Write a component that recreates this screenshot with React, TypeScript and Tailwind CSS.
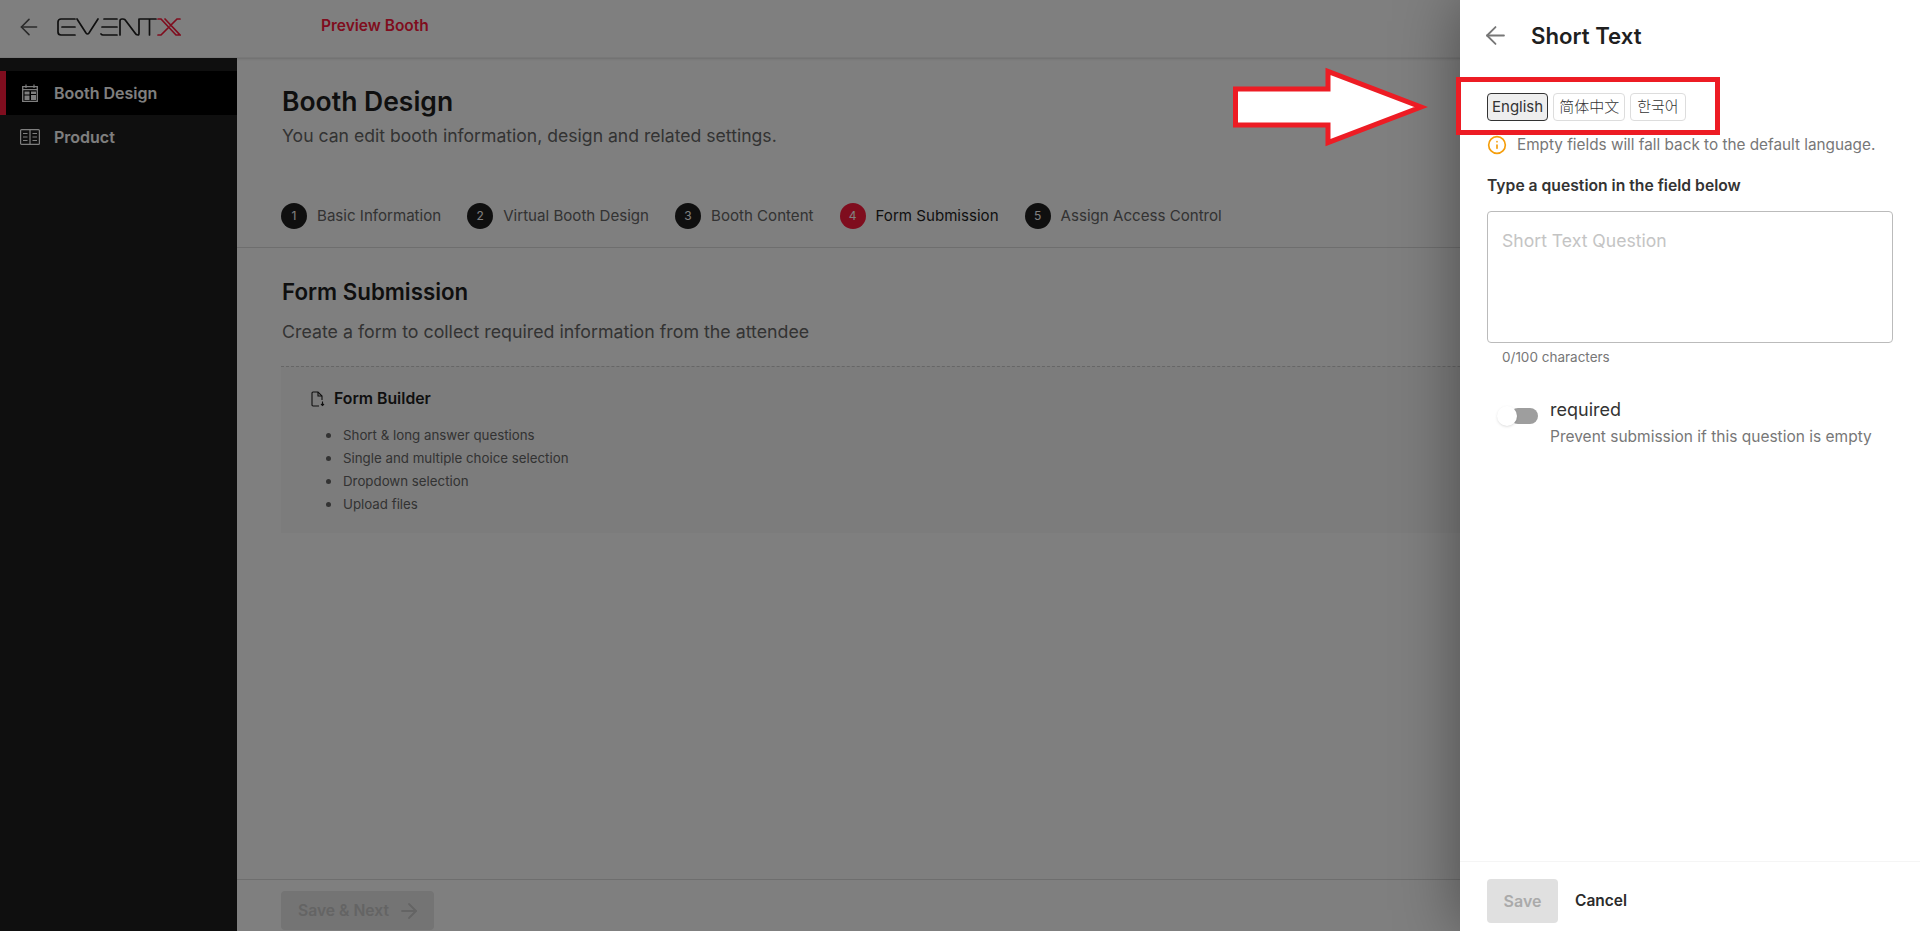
import { ArrowLeft, ArrowRight, Info } from "lucide-react";

const steps = [
    { n: 1, label: "Basic Information" },
    { n: 2, label: "Virtual Booth Design" },
    { n: 3, label: "Booth Content" },
    { n: 4, label: "Form Submission", active: true },
    { n: 5, label: "Assign Access Control" },
];

const features = [
    "Short & long answer questions",
    "Single and multiple choice selection",
    "Dropdown selection",
    "Upload files",
];

const Logo = () => (
    <svg width="124" height="20" viewBox="0 0 124 20" fill="none" strokeWidth="1.700" strokeLinecap="round">
        <g stroke="#1f1f1f">
            <path d="M18 2H4a3 3 0 0 0-3 3v10a3 3 0 0 0 3 3h14M5 10h13" />
            <path d="M20 2l9 14q1.500 2 3 0l9-14" />
            <path d="M60 2H47M60 18H46a3 3 0 0 1-2-1M45 10h15" />
            <path d="M63 18V4q0-2 2-2h1q2 0 3 2l9 12q1 2 3 2 1 0 1-2V2" />
            <path d="M83 2h16M92.500 2v16" />
        </g>
        <path d="M101 2h3l15 16h4L108 2M123 2h-3l-7 7M101 18h3l7-7" stroke="#ff1a3c" />
    </svg>
);

const BoothIcon = () => (
    <svg width="16" height="18" viewBox="0 0 16 18" fill="none">
        <path d="M.700 2.700h14.600v14.600H.700z" stroke="currentColor" strokeWidth="1.300" />
        <path d="M4 .500v3.500M12 .500v3.500M.700 5.700h14.600" stroke="currentColor" strokeWidth="1.200" />
        <path d="M2.500 7.500h5v3h-5zM9 11h5v5H9zM2.500 11.500h5v4.500h-5zM9 7.500h5v2.500H9z" fill="currentColor" />
    </svg>
);

const ProductIcon = () => (
    <svg width="20" height="16" viewBox="0 0 20 16" fill="none" stroke="currentColor" strokeWidth="1.200">
        <rect x="0.600" y="0.600" width="18.800" height="14.800" rx="1" />
        <path d="M10 1v14M3 4.500h4.500M3 8h4.500M3 11.500h4.500M12.500 4.500H17M12.500 8H17M12.500 11.500H17" />
    </svg>
);

const FormIcon = () => (
    <svg width="14" height="16" viewBox="0 0 14 16" fill="none" stroke="#1f1f1f" strokeWidth="1.100">
        <path d="M8 15H2a1 1 0 0 1-1-1V2a1 1 0 0 1 1-1h5l4 4v4" />
        <path d="M7 1v4h4M11.500 10.500v4M10 13l1.500 1.500L13 13" />
    </svg>
);

const App = () => {
    return (
        <div className="relative h-[931px] overflow-hidden bg-white font-['Inter','Noto_Sans_CJK_SC',sans-serif] text-[#1f1f1f]">
            <header className="flex h-[58px] items-center border-b border-[#f0f0f0] shadow-sm">
                <ArrowLeft className="ml-[16px] mb-[4px] text-[#555]" size={26} strokeWidth={1.500} />
                <div className="ml-[15px] mb-[4px]"><Logo /></div>
                <span className="ml-[140px] mb-[6px] text-[15.500px] font-semibold text-[#ff1a3c]">Preview Booth</span>
            </header>

            <div className="flex h-[873px]">
                <aside className="w-[237px] shrink-0 bg-[#1f1f1f] pt-[13px] text-white">
                    <div className="flex h-[44px] items-center border-l-[6px] border-[#ff1a3c] bg-black pl-[16px] text-[16px] font-semibold">
                        <BoothIcon />
                        <span className="ml-[16px]">Booth Design</span>
                    </div>
                    <div className="flex h-[44px] items-center pl-[20px] text-[16px] font-semibold">
                        <ProductIcon />
                        <span className="ml-[14px]">Product</span>
                    </div>
                </aside>

                <main className="flex min-w-0 flex-1 flex-col">
                    <div className="flex-1 pt-[26px]">
                        <div className="px-[45px]">
                            <h1 className="text-[26.500px] font-semibold leading-[34px]">Booth Design</h1>
                            <p className="mt-[4px] text-[17.600px] leading-[28px] text-[#666]">You can edit booth information, design and related settings.</p>
                        </div>
                        <div className="mt-[39px] flex h-[59px] gap-[26px] border-b border-[#ddd] px-[44px] pb-[4px]">
                            {steps.map((s) => (
                                <div key={s.n} className="flex items-center gap-[10px]">
                                    <span className={`flex h-[26px] w-[26px] items-center justify-center rounded-full text-[12px] text-white ${s.active ? "bg-[#ff1a3c]" : "bg-[#1f1f1f]"}`}>{s.n}</span>
                                    <span className={`text-[15.100px] ${s.active ? "text-[#1f1f1f]" : "text-[#666]"}`}>{s.label}</span>
                                </div>
                            ))}
                        </div>
                        <div className="px-[44px] pt-[30px]">
                            <h2 className="ml-px text-[22.300px] font-semibold leading-[28px]">Form Submission</h2>
                            <p className="ml-px mt-[14px] text-[17.800px] leading-[24px] text-[#666]">Create a form to collect required information from the attendee</p>
                            <div className="mt-[22px] h-[167px] border-t border-dashed border-[#ccc] bg-[#f9f9f9] pl-[30px] pt-[22px]">
                                <div className="flex h-[20px] items-center gap-[9px] text-[15.800px] font-semibold">
                                    <FormIcon />
                                    <span>Form Builder</span>
                                </div>
                                <ul className="mt-[14px] list-disc pl-[32px] text-[13.300px] leading-[22px] text-[#666] marker:text-[17px]">
                                    {features.map((f) => (
                                        <li key={f}>{f}</li>
                                    ))}
                                </ul>
                            </div>
                        </div>
                    </div>
                    <div className="h-[52px] border-t border-[#ddd] px-[44px] pt-[11px]">
                        <button className="flex h-[39px] w-[153px] items-center justify-center gap-[8px] rounded-[4px] bg-[#e8e8e8] pl-[4px] text-[15.700px] font-semibold text-[#c8c8c8]">
                            Save &amp; Next
                            <ArrowRight size={24} strokeWidth={1.800} />
                        </button>
                    </div>
                </main>
            </div>

            {/* dim layer */}
            <div className="absolute inset-0 bg-black/50" />

            {/* drawer */}
            <div className="absolute inset-y-0 right-0 flex w-[460px] flex-col bg-white shadow-[0_0_60px_rgba(0,0,0,0.4)]">
                <div className="flex h-[71px] items-center pl-[21px]">
                    <ArrowLeft className="text-[#777]" size={29} strokeWidth={1.500} />
                    <span className="ml-[21px] text-[22.200px] font-semibold">Short Text</span>
                </div>
                <div className="flex-1 px-[27px] pt-[22px]">
                    <div className="flex gap-[5px] text-[15px] text-[#333]">
                        <span className="flex h-[28px] items-center rounded-[4px] border border-[#333] bg-[#eee] px-[4px]">English</span>
                        <span className="flex h-[28px] items-center rounded-[4px] border border-[#ddd] px-[5px] font-light">简体中文</span>
                        <span className="flex h-[28px] items-center rounded-[4px] border border-[#ddd] px-[6px] font-light">한국어</span>
                    </div>
                    <div className="mt-[14px] flex h-[20px] items-center gap-[10px] text-[15.300px] leading-[20px] text-[#777]">
                        <Info size={20} className="text-[#f59e0b]" />
                        <span>Empty fields will fall back to the default language.</span>
                    </div>
                    <p className="mt-[21px] text-[15.700px] font-semibold leading-[20px] text-[#333]">Type a question in the field below</p>
                    <div className="mt-[15px] h-[132px] rounded-[4px] border border-[#bbb] px-[14px] py-[17px] text-[17.600px] leading-[24px] text-[#c4c4c4]">Short Text Question</div>
                    <p className="mt-[6px] pl-[15px] text-[13.500px] leading-[16px] text-[#777]">0/100 characters</p>
                    <div className="mt-[34px] flex pl-[9px]">
                        <div className="relative mt-[9px] h-[16px] w-[28px] shrink-0 translate-x-[14px] rounded-full bg-[#9e9e9e]">
                            <span className="absolute left-[-13px] top-[-2px] h-[20px] w-[20px] rounded-full bg-white shadow" />
                        </div>
                        <div className="ml-[26px]">
                            <p className="text-[18px] leading-[22px] text-[#333]">required</p>
                            <p className="mt-[6px] text-[15.500px] leading-[20px] text-[#777]">Prevent submission if this question is empty</p>
                        </div>
                    </div>
                </div>
                <div className="flex h-[70px] items-center gap-[17px] border-t border-[#f5f5f5] px-[27px] pt-[9px]">
                    <button className="h-[44px] w-[71px] rounded-[4px] bg-[#e0e0e0] text-[16px] font-semibold text-[#aaa]">Save</button>
                    <button className="text-[15.500px] font-semibold text-[#2b2b2b]">Cancel</button>
                </div>
            </div>

            {/* annotation on the screenshot */}
            <svg className="absolute left-[1230px] top-[66px]" width="200" height="82" viewBox="0 0 200 82" fill="none">
                <path d="M5.500 23H98V5.500L191 41 98 76.500V59H5.500z" fill="#fff" stroke="#ed1c24" strokeWidth="5" />
            </svg>
            <div className="absolute left-[1456px] top-[77px] h-[58px] w-[264px] border-[5px] border-[#ed1c24]" />
        </div>
    );
};

export default App;
